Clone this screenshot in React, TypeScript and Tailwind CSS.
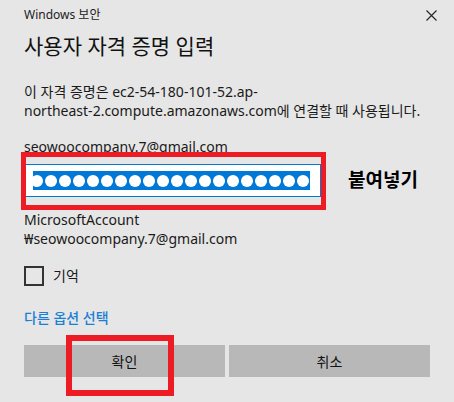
import React from 'react';

const font = "font-['Noto_Sans','Noto_Sans_CJK_KR',sans-serif]";

const Dots = () => (
  <div className="flex h-[19px] w-[277px] items-center justify-end gap-[2px] overflow-hidden bg-[#0078d7] pr-[1px]">
    {Array.from({ length: 20 }).map((_, i) => (
      <div key={i} className="h-[12px] w-[12px] shrink-0 rounded-full bg-white" />
    ))}
  </div>
);

const App = () => {
  return (
    <div className={`relative h-[402px] w-[454px] overflow-hidden bg-[#e6e6e6] text-[#1a1a1a] ${font}`}>
      <div className="pl-[24px] pr-[16px]">
        {/* title bar */}
        <div className="flex h-[30px] items-center justify-between">
          <span className="text-[12px] text-[#222]">Windows 보안</span>
          <svg width="11" height="11" viewBox="0 0 11 11" className="mr-[1px]">
            <path d="M0.5 0.5 L10.5 10.5 M10.5 0.5 L0.5 10.5" stroke="#222" strokeWidth="1.1" />
          </svg>
        </div>

        <h1 className="mt-[2px] text-[21px] leading-[28px] font-normal text-[#111]">사용자 자격 증명 입력</h1>

        <p className="mt-[22px] text-[14px] leading-[19px]">
          이 자격 증명은 ec2-54-180-101-52.ap-
          <br />
          northeast-2.compute.amazonaws.com에 연결할 때 사용됩니다.
        </p>

        <div className="mt-[17px] text-[14px] leading-[19px]">seowoocompany.7@gmail.com</div>

        {/* password row */}
        <div className="mt-[8px] flex items-center">
          <div className="ml-[1px] flex h-[33px] w-[296px] items-center border border-[#0078d7] bg-white pl-[7px]">
            <Dots />
          </div>
          <span className="ml-[27px] text-[19px] font-bold text-black">붙여넣기</span>
        </div>

        <div className="mt-[13px] text-[14px] leading-[19px]">
          MicrosoftAccount
          <br />
          ₩seowoocompany.7@gmail.com
        </div>

        <label className="mt-[17px] flex items-center">
          <span className="h-[20px] w-[20px] border-2 border-[#333]" />
          <span className="ml-[9px] text-[14px]">기억</span>
        </label>

        <div className="mt-[21px] text-[14px] font-medium text-[#1b7fd6]">다른 옵션 선택</div>

        <div className="mt-[17px] flex w-[406px] gap-[4px]">
          <button className="flex h-[32px] flex-1 items-center justify-center bg-[#b8b8b8] text-[14px] text-[#111]">확인</button>
          <button className="flex h-[32px] flex-1 items-center justify-center bg-[#b8b8b8] text-[14px] text-[#111]">취소</button>
        </div>
      </div>

      {/* red annotation boxes */}
      <div className="absolute left-[21px] top-[152px] h-[58px] w-[305px] border-[5px] border-[#ed1c24]" />
      <div className="absolute left-[66px] top-[335px] h-[61px] w-[108px] border-[6px] border-[#ed1c24]" />
    </div>
  );
};

export default App;
